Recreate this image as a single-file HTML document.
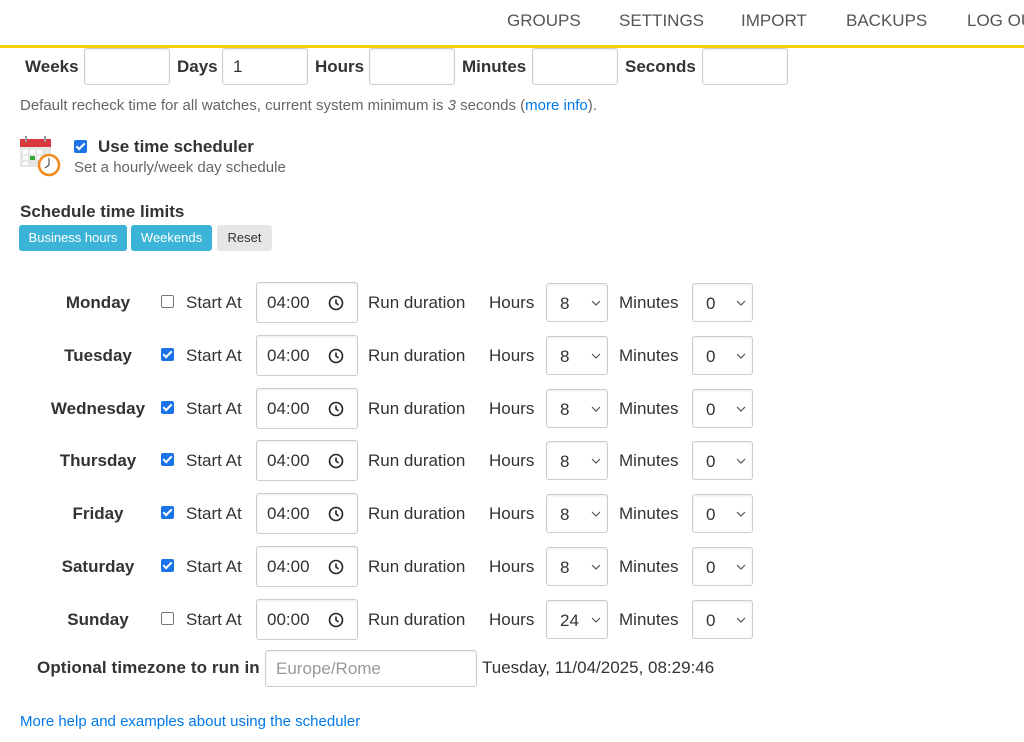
<!DOCTYPE html>
<html><head><meta charset="utf-8"><style>
body{margin:0;width:1024px;height:742px;overflow:hidden;background:#fff;font-family:"Liberation Sans",Arial,sans-serif;color:#333;position:relative}
.a{position:absolute;white-space:nowrap}
.nav{font-size:17px;color:#555;top:11px}
.b{font-weight:bold;font-size:17px;color:#333}
.inp{position:absolute;border:1px solid #ccc;border-radius:3px;background:#fff;box-sizing:border-box;box-shadow:inset 0 1px 2px rgba(0,0,0,.08)}
.t{font-size:17px;color:#333}
.cb{position:absolute;width:13px;height:13px;box-sizing:border-box;border-radius:2px}
.cb.off{border:1px solid #767676;background:#fff}
.cb.on{background:#1a73e8}
.cb.on:after{content:"";position:absolute;left:4px;top:1px;width:3px;height:7px;border:solid #fff;border-width:0 2px 2px 0;transform:rotate(45deg)}
.btn{position:absolute;top:225px;height:26px;border-radius:3px;font-size:13px;line-height:26px;text-align:center;color:#fff;background:#3bb4d8}
</style></head><body>
<div class="a nav" style="left:507px">GROUPS</div>
<div class="a nav" style="left:619px">SETTINGS</div>
<div class="a nav" style="left:741px">IMPORT</div>
<div class="a nav" style="left:846px">BACKUPS</div>
<div class="a nav" style="left:967px">LOG OUT</div>
<div class="a" style="left:0;top:45px;width:1024px;height:3px;background:#f5d000"></div>

<div class="a b" style="left:25px;top:57px">Weeks</div>
<div class="inp" style="left:84px;top:48px;width:86px;height:37px"></div>
<div class="a b" style="left:177px;top:57px">Days</div>
<div class="inp" style="left:222px;top:48px;width:86px;height:37px"><span class="a t" style="left:10px;top:8px">1</span></div>
<div class="a b" style="left:315px;top:57px">Hours</div>
<div class="inp" style="left:369px;top:48px;width:86px;height:37px"></div>
<div class="a b" style="left:462px;top:57px">Minutes</div>
<div class="inp" style="left:532px;top:48px;width:86px;height:37px"></div>
<div class="a b" style="left:625px;top:57px">Seconds</div>
<div class="inp" style="left:702px;top:48px;width:86px;height:37px"></div>

<div class="a" style="left:20px;top:97px;font-size:15px;color:#666">Default recheck time for all watches, current system minimum is <i>3</i> seconds (<span style="color:#0078e7">more info</span>).</div>

<svg class="a" style="left:19px;top:136px" width="42" height="42" viewBox="0 0 42 42">
<rect x="1" y="3" width="31" height="28" fill="#e6e6e6"/><rect x="1" y="3" width="31" height="8" fill="#d9363e"/>
<rect x="6" y="0" width="2" height="6" fill="#999"/><rect x="25" y="0" width="2" height="6" fill="#999"/>
<g fill="#fff"><rect x="4" y="14" width="5" height="4"/><rect x="11" y="14" width="5" height="4"/><rect x="18" y="14" width="5" height="4"/><rect x="4" y="20" width="5" height="4"/><rect x="18" y="20" width="5" height="4"/><rect x="4" y="26" width="5" height="3"/></g>
<rect x="11" y="20" width="5" height="4" fill="#3a3"/>
<circle cx="30" cy="29" r="10" fill="#fff" stroke="#f08a1c" stroke-width="2.5"/>
<path d="M30 22v7l-4 3" stroke="#333" stroke-width="1" fill="none"/>
</svg>
<div class="cb on" style="left:74px;top:140px"></div>
<div class="a b" style="left:98px;top:137px">Use time scheduler</div>
<div class="a" style="left:74px;top:159px;font-size:15px;color:#666">Set a hourly/week day schedule</div>

<div class="a b" style="left:20px;top:202px">Schedule time limits</div>
<div class="btn" style="left:19px;width:108px">Business hours</div>
<div class="btn" style="left:131px;width:81px">Weekends</div>
<div class="btn" style="left:217px;width:55px;background:#e6e6e6;color:#333">Reset</div>

<div id="rows"></div>

<div class="a b" style="left:37px;top:658px;letter-spacing:0.1px">Optional timezone to run in</div>
<div class="inp" style="left:265px;top:650px;width:212px;height:37px"><span class="a t" style="left:10px;top:8px;color:#999">Europe/Rome</span></div>
<div class="a t" style="left:482px;top:658px">Tuesday, 11/04/2025, 08:29:46</div>
<div class="a" style="left:20px;top:713px;font-size:15px;color:#0078e7">More help and examples about using the scheduler</div>

<script>
var d=[["Monday",0,"04:00","8"],["Tuesday",1,"04:00","8"],["Wednesday",1,"04:00","8"],["Thursday",1,"04:00","8"],["Friday",1,"04:00","8"],["Saturday",1,"04:00","8"],["Sunday",0,"00:00","24"]];
var h="";
var clk='<svg class="a" style="left:71px;top:12px" width="16" height="16" viewBox="0 0 16 16"><circle cx="8" cy="8" r="6.5" fill="none" stroke="#222" stroke-width="1.6"/><path d="M8 4.5V8l2.5 2" fill="none" stroke="#222" stroke-width="1.6"/></svg>';
var chev='<svg class="a" style="right:6px;top:16px" width="10" height="7" viewBox="0 0 10 7"><path d="M1 1l4 4 4-4" fill="none" stroke="#555" stroke-width="1.2"/></svg>';
d.forEach(function(r,i){var c=302+i*52.8,t=c-9;
h+='<div class="a b" style="left:48px;width:100px;text-align:center;top:'+t+'px">'+r[0]+'</div>';
h+='<div class="cb '+(r[1]?'on':'off')+'" style="left:161px;top:'+(c-7)+'px"></div>';
h+='<div class="a t" style="left:186px;top:'+t+'px">Start At</div>';
h+='<div class="inp" style="left:256px;top:'+(c-20)+'px;width:102px;height:41px"><span class="a t" style="left:10px;top:10px">'+r[2]+'</span>'+clk+'</div>';
h+='<div class="a t" style="left:368px;top:'+t+'px">Run duration</div>';
h+='<div class="a t" style="left:489px;top:'+t+'px">Hours</div>';
h+='<div class="inp" style="left:546px;top:'+(c-19)+'px;width:62px;height:39px"><span class="a t" style="left:13px;top:10px">'+r[3]+'</span>'+chev+'</div>';
h+='<div class="a t" style="left:619px;top:'+t+'px">Minutes</div>';
h+='<div class="inp" style="left:692px;top:'+(c-19)+'px;width:61px;height:39px"><span class="a t" style="left:13px;top:10px">0</span>'+chev+'</div>';
});
document.getElementById("rows").innerHTML=h;
</script>
</body></html>
